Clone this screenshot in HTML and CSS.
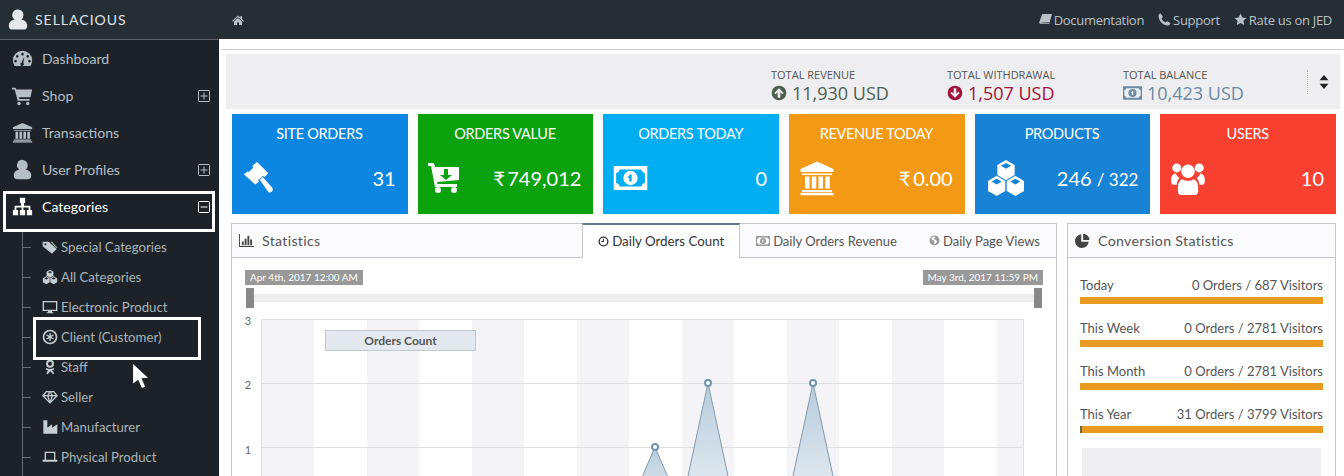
FILE: index.html
```html
<!DOCTYPE html>
<html lang="en">
<head>
    <meta charset="UTF-8">
    <title>Sellacious - Dashboard</title>
    <link rel="stylesheet" href="styles.css">
</head>
<body>
    <svg class="sprite" aria-hidden="true">
        <symbol id="i-user" viewBox="0 0 24 24"><path d="M12 1a6 6 0 0 1 6 6 6 6 0 0 1-2.4 5c3.600.6 6.400 2.800 6.400 7 0 2.500-1.500 4-4 4H6c-2.500 0-4-1.500-4-4 0-4.200 2.800-6.400 6.400-7A6 6 0 0 1 12 1z"/></symbol>
        <symbol id="i-bank" viewBox="0 0 24 24"><path d="M12 1l11 5v2H1V6zM2 9h20v1H2zM4 11h3v8H4zM8.500 11h3v8h-3zM13 11h3v8h-3zM17.500 11h3v8h-3zM2 20h20v1.500H2zM1 22h22v1.500H1z"/></symbol>
        <symbol id="i-money" viewBox="0 0 28 20"><path fill-rule="evenodd" d="M0 0h28v20H0zM5 3a4 4 0 0 1-3 3v8a4 4 0 0 1 3 3h18a4 4 0 0 1 3-3V6a4 4 0 0 1-3-3zM14 4a6 6 0 1 1 0 12 6 6 0 0 1 0-12zM13 7v1.500h-1V10h1v3h2V7z"/></symbol>
        <symbol id="i-cubes" viewBox="0 0 28 25"><path fill-rule="evenodd" d="M14 0l6 3.500v7L14 14l-6-3.500v-7zM14 2l-3.500 2 3.500 2 3.500-2zM7.500 11l6 3.500v7l-6 3.500-6-3.500v-7zM7.500 13L4 15l3.500 2 3.500-2zM20.500 11l6 3.500v7l-6 3.500-6-3.500v-7zM20.500 13L17 15l3.500 2 3.500-2z"/></symbol>
        <symbol id="i-plus" viewBox="0 0 14 14"><path fill="none" stroke="currentColor" d="M2.500 1.500h9a1 1 0 0 1 1 1v9a1 1 0 0 1-1 1h-9a1 1 0 0 1-1-1v-9a1 1 0 0 1 1-1zM3.500 7h7M7 3.500v7"/></symbol>
    </svg>

    <div class="sidebar">
        <div class="brand">
            <svg class="brand-icon"><use href="#i-user"/></svg>
            <span>SELLACIOUS</span>
        </div>
        <ul class="menu">
            <li>
                <svg class="menu-icon" viewBox="0 0 24 24"><path fill-rule="evenodd" d="M12 3a11 11 0 0 1 11 11c0 2.500-.7 4.700-2 6.500H3A11 11 0 0 1 1 14 11 11 0 0 1 12 3zM12 5.500a1.500 1.500 0 1 0 0 3 1.500 1.500 0 0 0 0-3zM6 8a1.500 1.500 0 1 0 0 3 1.500 1.500 0 0 0 0-3zM18 8a1.500 1.500 0 1 0 0 3 1.500 1.500 0 0 0 0-3zM4 13.500a1.500 1.500 0 1 0 0 3 1.500 1.500 0 0 0 0-3zM20 13.500a1.500 1.500 0 1 0 0 3 1.500 1.500 0 0 0 0-3zM14 10l-3 6.500a2 2 0 1 0 2 .5z"/></svg>
                <span>Dashboard</span>
            </li>
            <li>
                <svg class="menu-icon" viewBox="0 0 24 24"><path d="M0 3h4l1 2h18l-2 9H8l.4 2H20v2H6.500L3 5H0zM8 19a2 2 0 1 1 0 4 2 2 0 0 1 0-4zM18 19a2 2 0 1 1 0 4 2 2 0 0 1 0-4z"/></svg>
                <span>Shop</span>
                <svg class="toggle"><use href="#i-plus"/></svg>
            </li>
            <li>
                <svg class="menu-icon"><use href="#i-bank"/></svg>
                <span>Transactions</span>
            </li>
            <li>
                <svg class="menu-icon"><use href="#i-user"/></svg>
                <span>User Profiles</span>
                <svg class="toggle"><use href="#i-plus"/></svg>
            </li>
            <li class="open">
                <svg class="menu-icon" viewBox="0 0 24 24"><path d="M9 2h6v6h-1.200v3H21v5h2v6h-6v-6h2v-3h-6v3h2v6H9v-6h2v-3H5v3h2v6H1v-6h2v-5h7.200V8H9z"/></svg>
                <span>Categories</span>
                <svg class="toggle" viewBox="0 0 14 14"><path fill="none" stroke="currentColor" d="M2.500 1.500h9a1 1 0 0 1 1 1v9a1 1 0 0 1-1 1h-9a1 1 0 0 1-1-1v-9a1 1 0 0 1 1-1zM3.500 7h7"/></svg>
            </li>
        </ul>
        <ul class="submenu">
            <li>
                <svg class="sub-icon" viewBox="0 0 24 24"><path fill-rule="evenodd" d="M1 4h9l12 11-7 7L1 11zM5 6.500a1.500 1.500 0 1 0 0 3 1.500 1.500 0 0 0 0-3z"/><path d="M13 4h2l8 9-1 1z"/></svg>
                <span>Special Categories</span>
            </li>
            <li>
                <svg class="sub-icon"><use href="#i-cubes"/></svg>
                <span>All Categories</span>
            </li>
            <li>
                <svg class="sub-icon" viewBox="0 0 24 24"><path fill-rule="evenodd" d="M1 3h22v15h-8v2h2v1.500H7V20h2v-2H1zM3 5v11h18V5z"/></svg>
                <span>Electronic Product</span>
            </li>
            <li>
                <svg class="sub-icon" viewBox="0 0 24 24"><path fill-rule="evenodd" d="M12 1a11 11 0 1 1 0 22 11 11 0 0 1 0-22zM12 3.500a8.500 8.500 0 1 0 0 17 8.500 8.500 0 0 0 0-17zM11 6h2v4.300l3.700-2.100 1 1.700L14 12l3.700 2.100-1 1.700-3.700-2.100V18h-2v-4.300l-3.700 2.100-1-1.700L10 12 6.300 9.900l1-1.700 3.700 2.100z"/></svg>
                <span>Client (Customer)</span>
            </li>
            <li>
                <svg class="sub-icon" viewBox="0 0 24 24"><path fill-rule="evenodd" d="M12 1a6 6 0 1 1 0 12 6 6 0 0 1 0-12zM12 4a3 3 0 1 0 0 6 3 3 0 0 0 0-6zM6.500 13.500c3 2 8 2 11 0l1 2c-1 .8-2.300 1.300-3.500 1.600l3.500 4.200-2 1.700-4-4.500-4 4.500-2-1.700L9 17.100c-1.200-.3-2.500-.8-3.500-1.600z"/></svg>
                <span>Staff</span>
            </li>
            <li>
                <svg class="sub-icon" viewBox="0 0 24 24"><path fill-rule="evenodd" d="M6 3h12l6 7-12 12L0 10zM7 5L3.500 9h4.800L10 5zM14 5l1.700 4h4.800L17 5zM11.900 5L10.300 9h3.400zM3.600 11l6.400 6.500L7.700 11zM10 11l2 7 2-7zM16.300 11L14 17.500l6.400-6.500z"/></svg>
                <span>Seller</span>
            </li>
            <li>
                <svg class="sub-icon" viewBox="0 0 24 24"><path d="M2 2h6v11l7-5v5l8-5v14H2z"/></svg>
                <span>Manufacturer</span>
            </li>
            <li>
                <svg class="sub-icon" viewBox="0 0 24 24"><path fill-rule="evenodd" d="M4 4h16v12h3v3H1v-3h3zM6 6v10h12V6z"/></svg>
                <span>Physical Product</span>
            </li>
        </ul>

        <div class="mark mark-categories"></div>
        <div class="mark mark-client"></div>
        <svg class="pointer" viewBox="0 0 18 28"><path d="M1 1l16 15-7 .5 4 9-3.500 1.500-4-9L1 22z"/></svg>
    </div>

    <div class="main">
        <div class="topbar">
            <svg class="home-icon" viewBox="0 0 24 24"><path d="M12 3l5 4.500V4h3v6.200L24 14l-1.500 1.500L12 6 1.500 15.500 0 14zM4 15l8-7 8 7v7h-6v-5h-4v5H4z"/></svg>
            <div class="top-links">
                <span><svg viewBox="0 0 24 24"><path d="M6 2h18l-5 18H3c-2 0-3-1.500-2.500-3.500zM4 17.500L3.500 18H18l.5-1.500z"/></svg>Documentation</span>
                <span><svg viewBox="0 0 24 24"><path d="M5 1l4 6-2.500 3c1 3 4 6 7.500 7.500l3-2.500 6 4c-1 3-3 4-5 4C9 23 1 14 1 5c0-2 1.500-3.500 4-4z"/></svg>Support</span>
                <span><svg viewBox="0 0 24 24"><path d="M12 1l3.400 7.300 7.600.9-5.600 5.300 1.500 7.800L12 18.500l-6.900 3.800 1.500-7.800L1 9.200l7.600-.9z"/></svg>Rate us on JED</span>
            </div>
        </div>

        <div class="content">
            <div class="summary">
                <div class="total total-revenue">
                    <div class="total-label">TOTAL REVENUE</div>
                    <div class="total-value">
                        <svg viewBox="0 0 24 24"><path fill-rule="evenodd" d="M12 1a11 11 0 1 1 0 22 11 11 0 0 1 0-22zM12 5l-7 7 2 2 3-3v8h4v-8l3 3 2-2z"/></svg>
                        11,930 USD
                    </div>
                </div>
                <div class="total total-withdrawal">
                    <div class="total-label">TOTAL WITHDRAWAL</div>
                    <div class="total-value">
                        <svg viewBox="0 0 24 24"><path fill-rule="evenodd" d="M12 1a11 11 0 1 1 0 22 11 11 0 0 1 0-22zM12 19l7-7-2-2-3 3V5h-4v8l-3-3-2 2z"/></svg>
                        1,507 USD
                    </div>
                </div>
                <div class="total total-balance">
                    <div class="total-label">TOTAL BALANCE</div>
                    <div class="total-value">
                        <svg class="money-sm"><use href="#i-money"/></svg>
                        10,423 USD
                    </div>
                </div>
                <div class="sorter">
                    <svg viewBox="0 0 12 18"><path d="M6 1l5 6H1zM1 11h10l-5 6z"/></svg>
                </div>
            </div>

            <div class="cards">
                <div class="card card-blue">
                    <div class="card-title">SITE ORDERS</div>
                    <div class="card-body">
                        <svg class="card-icon" viewBox="0 0 32 34"><path d="M15 0l12 12-4 4-2-1-5 5 1 1-4 3L1 13l4-3 1 1 5-5-1-2zM18 19l3-3 10 11c1 2 1 3 0 4s-3 2-4 1z"/></svg>
                        <div class="card-value">31</div>
                    </div>
                </div>
                <div class="card card-green">
                    <div class="card-title">ORDERS VALUE</div>
                    <div class="card-body">
                        <svg class="card-icon" viewBox="0 0 32 30"><path fill-rule="evenodd" d="M0 0h6l1 4h24v13l-22 2 .5 2H29v3H7L3 3H0zM16 6v6h-4l6 5 6-5h-4V6zM10 24a3 3 0 1 1 0 6 3 3 0 0 1 0-6zM26 24a3 3 0 1 1 0 6 3 3 0 0 1 0-6z"/></svg>
                        <div class="card-value">₹&thinsp;749,012</div>
                    </div>
                </div>
                <div class="card card-sky">
                    <div class="card-title">ORDERS TODAY</div>
                    <div class="card-body">
                        <svg class="card-icon card-icon-money"><use href="#i-money"/></svg>
                        <div class="card-value">0</div>
                    </div>
                </div>
                <div class="card card-orange">
                    <div class="card-title">REVENUE TODAY</div>
                    <div class="card-body">
                        <svg class="card-icon card-icon-bank"><use href="#i-bank"/></svg>
                        <div class="card-value">₹&thinsp;0.00</div>
                    </div>
                </div>
                <div class="card card-blue2">
                    <div class="card-title">PRODUCTS</div>
                    <div class="card-body">
                        <svg class="card-icon card-icon-cubes"><use href="#i-cubes"/></svg>
                        <div class="card-value">246 <small>/ 322</small></div>
                    </div>
                </div>
                <div class="card card-red">
                    <div class="card-title">USERS</div>
                    <div class="card-body">
                        <svg class="card-icon card-icon-users" viewBox="0 0 32 32"><path d="M6 3a4 4 0 1 1 0 8 4 4 0 0 1 0-8zM26 3a4 4 0 1 1 0 8 4 4 0 0 1 0-8zM16 4a6 6 0 1 1 0 12 6 6 0 0 1 0-12zM1 18c0-4 2-6 4-6 1 2 2 3 3.500 4-1.500 1.500-2.500 3-2.500 6H3c-1 0-2-1-2-4zM31 18c0-4-2-6-4-6-1 2-2 3-3.500 4 1.500 1.500 2.500 3 2.500 6h3c1 0 2-1 2-4zM11 17c3 2 7 2 10 0 3 1 4 4 4 8v3c0 2-1 3-3 3H10c-2 0-3-1-3-3v-3c0-4 1-7 4-8z"/></svg>
                        <div class="card-value">10</div>
                    </div>
                </div>
            </div>

            <div class="panels">
                <div class="panel panel-stats">
                    <div class="panel-head">
                        <div class="panel-title">
                            <svg viewBox="0 0 16 14"><path d="M0 0h1v13h15v1H0zM3 8h2v4H3zM6 5h2v7H6zM9 2h2v10H9zM12 6h2v6h-2z"/></svg>
                            Statistics
                        </div>
                        <div class="tab active">
                            <svg viewBox="0 0 24 24"><path fill-rule="evenodd" d="M12 1a11 11 0 1 1 0 22 11 11 0 0 1 0-22zM12 4a8 8 0 1 0 0 16 8 8 0 0 0 0-16zM11 6h2v7H7v-2h4z"/></svg>
                            Daily Orders Count
                        </div>
                        <div class="tab">
                            <svg class="tab-money"><use href="#i-money"/></svg>
                            Daily Orders Revenue
                        </div>
                        <div class="tab">
                            <svg viewBox="0 0 24 24"><path d="M12 1a11 11 0 1 1 0 22 11 11 0 0 1 0-22zM9 4L5 7l2 4 4 1 1 3-1 5 3-1 4-5-3-3-3-1-1-3 3-1-1-2z" fill-rule="evenodd"/></svg>
                            Daily Page Views
                        </div>
                    </div>
                    <div class="panel-body">
                        <div class="range-labels">
                            <span>Apr 4th, 2017 12:00 AM</span>
                            <span>May 3rd, 2017 11:59 PM</span>
                        </div>
                        <div class="range">
                            <div class="range-handle"></div>
                            <div class="range-track"></div>
                            <div class="range-handle"></div>
                        </div>
                        <div class="chart">
                            <svg class="plot" viewBox="0 0 825 168">
                                <defs>
                                    <linearGradient id="fade" x1="0" y1="0" x2="0" y2="1">
                                        <stop offset="0" stop-color="#b7cbdb"/>
                                        <stop offset="1" stop-color="#eaf0f5"/>
                                    </linearGradient>
                                </defs>
                                <g fill="#f4f3f6">
                                    <rect x="31" y="10" width="53" height="158"/>
                                    <rect x="137" y="10" width="52" height="158"/>
                                    <rect x="242" y="10" width="52" height="158"/>
                                    <rect x="347" y="10" width="52" height="158"/>
                                    <rect x="452" y="10" width="52" height="158"/>
                                    <rect x="557" y="10" width="52" height="158"/>
                                    <rect x="662" y="10" width="52" height="158"/>
                                    <rect x="767" y="10" width="27" height="158"/>
                                </g>
                                <path d="M31 10.500H794M31 74.500H794M31 138.500H794M31.500 10V168M793.500 10V168" stroke="#e0e0e0" fill="none"/>
                                <g fill="url(#fade)" stroke="#7f9bb0">
                                    <path d="M397.500 202L425 138 452.500 202z"/>
                                    <path d="M450.500 202L478 74 505.500 202z"/>
                                    <path d="M555.500 202L583 74 610.500 202z"/>
                                </g>
                                <g fill="#fff" stroke="#6f95ac" stroke-width="2">
                                    <circle cx="425" cy="138" r="3"/>
                                    <circle cx="478" cy="74" r="3"/>
                                    <circle cx="583" cy="74" r="3"/>
                                </g>
                                <g class="axis">
                                    <text x="18" y="16">3</text>
                                    <text x="18" y="80">2</text>
                                    <text x="18" y="145">1</text>
                                </g>
                            </svg>
                            <div class="legend">Orders Count</div>
                        </div>
                    </div>
                </div>

                <div class="panel panel-conversion">
                    <div class="panel-head">
                        <div class="panel-title">
                            <svg viewBox="0 0 24 24"><path d="M10 2v12h12A11 11 0 1 1 10 2zM13 1a10 10 0 0 1 10 10H13z"/></svg>
                            Conversion Statistics
                        </div>
                    </div>
                    <div class="conversion-body">
                        <div class="rate">
                            <div class="rate-text"><span>Today</span><span>0 Orders / 687 Visitors</span></div>
                            <div class="rate-bar"></div>
                        </div>
                        <div class="rate">
                            <div class="rate-text"><span>This Week</span><span>0 Orders / 2781 Visitors</span></div>
                            <div class="rate-bar"></div>
                        </div>
                        <div class="rate">
                            <div class="rate-text"><span>This Month</span><span>0 Orders / 2781 Visitors</span></div>
                            <div class="rate-bar"></div>
                        </div>
                        <div class="rate">
                            <div class="rate-text"><span>This Year</span><span>31 Orders / 3799 Visitors</span></div>
                            <div class="rate-bar"><div class="rate-fill" style="width: 1%"></div></div>
                        </div>
                        <div class="conversion-chart"></div>
                    </div>
                </div>
            </div>
        </div>
    </div>
</body>
</html>
```

FILE: styles.css
```css
/* Global Styles */
* {
    margin: 0;
    padding: 0;
    box-sizing: border-box;
}

body {
    font-family: 'Lato', sans-serif;
    background-color: #fff;
    display: flex;
    height: 100vh;
    overflow: hidden;
    color: #444;
}

svg {
    fill: currentColor;
    flex-shrink: 0;
}

ul {
    list-style: none;
}

.sprite {
    display: none;
}

/* Sidebar */
.sidebar {
    position: relative;
    display: flex;
    flex-direction: column;
    width: 219px;
    flex-shrink: 0;
    background-color: #1d2229;
    color: #b4bfc4;
}

.brand {
    display: flex;
    align-items: center;
    gap: 6px;
    height: 40px;
    padding-left: 7px;
    background-color: #252d35;
    border-bottom: 1px solid #5b6166;
    color: #dfe3e5;
    font-size: 14px;
    letter-spacing: 1px;
}

.brand-icon {
    width: 22px;
    height: 23px;
    color: #e4e8ea;
}

.menu li {
    display: flex;
    align-items: center;
    height: 37px;
    padding-left: 12px;
    font-size: 14.1px;
}

.menu-icon {
    width: 21px;
    height: 21px;
    margin-right: 9px;
}

.toggle {
    width: 14px;
    height: 14px;
    margin-left: auto;
    margin-right: 8px;
}

.menu li.open {
    color: #fff;
}

.submenu {
    flex-grow: 1;
    margin-top: 7px;
    margin-left: 22px;
    border-left: 1px solid #666b70;
}

.submenu li {
    display: flex;
    align-items: center;
    height: 30px;
    padding-left: 19px;
    font-size: 13.2px;
    color: #a9b4b8;
    position: relative;
}

.submenu li::before {
    content: "";
    position: absolute;
    left: 0;
    top: 15px;
    width: 8px;
    height: 1px;
    background-color: #666b70;
}

.sub-icon {
    width: 16px;
    height: 16px;
    margin-right: 3px;
    color: #c5ced1;
}

/* White marks drawn over the menu */
.mark {
    position: absolute;
    border: 3px solid #fff;
}

.mark-categories {
    left: 3px;
    top: 191px;
    width: 212px;
    height: 41px;
}

.mark-client {
    left: 33px;
    top: 317px;
    width: 168px;
    height: 43px;
}

.pointer {
    position: absolute;
    left: 132px;
    top: 363px;
    width: 17px;
    height: 26px;
    color: #fff;
}

/* Main Content Area */
.main {
    flex-grow: 1;
    min-width: 0;
}

.topbar {
    display: flex;
    align-items: center;
    height: 39px;
    padding: 0 12px 0 13px;
    background-color: #252d35;
    color: #b9c2c7;
}

.home-icon {
    width: 12px;
    height: 12px;
}

.top-links {
    display: flex;
    gap: 14px;
    margin-left: auto;
    font-family: 'Open Sans', sans-serif;
    font-size: 13px;
    letter-spacing: -0.3px;
}

.top-links span {
    display: flex;
    align-items: center;
    gap: 2px;
}

.top-links svg {
    width: 13px;
    height: 13px;
}

.content {
    margin: 10px 0 0 2px;
    border-top: 1px solid #cfcfd4;
    padding: 4px 4px 0 5px;
}

/* Summary strip */
.summary {
    display: flex;
    justify-content: flex-end;
    align-items: center;
    height: 55px;
    background-color: #eeeef0;
    font-family: 'Open Sans', sans-serif;
}

.total {
    width: 176px;
    margin-top: 9px;
}

.total-balance {
    width: 184px;
}

.total-label {
    font-size: 11px;
    line-height: 13px;
    color: #555;
}

.total-value {
    display: flex;
    align-items: center;
    gap: 5px;
    font-size: 18px;
    line-height: 24px;
}

.total-value svg {
    width: 16px;
    height: 16px;
}

.total-value .money-sm {
    width: 19px;
    height: 14px;
}

.total-revenue .total-value {
    color: #4d5f50;
}

.total-withdrawal .total-value {
    color: #a1123a;
}

.total-balance .total-value {
    color: #6b8aa6;
}

.sorter {
    display: flex;
    align-items: center;
    width: 33px;
    height: 24px;
    padding-left: 10px;
    border-left: 1px dotted #bbb;
    color: #222;
}

.sorter svg {
    width: 12px;
    height: 16px;
}

/* Stat cards */
.cards {
    display: flex;
    gap: 10px;
    margin: 5px 4px 0 6px;
}

.card {
    flex: 1;
    height: 100px;
    padding: 12px 12px 0 11px;
    color: #fff;
}

.card-title {
    text-align: center;
    font-size: 14.5px;
    line-height: 16px;
    letter-spacing: -0.3px;
}

.card-body {
    display: flex;
    align-items: center;
    justify-content: space-between;
    margin-top: 11px;
    height: 50px;
}

.card-icon {
    width: 32px;
    height: 32px;
    margin-left: -1px;
}

.card-icon-money {
    width: 35px;
    height: 24px;
}

.card-icon-bank {
    width: 36px;
    height: 36px;
}

.card-icon-cubes {
    width: 42px;
    height: 36px;
}

.card-icon-users {
    width: 36px;
    height: 36px;
}

.card-value {
    font-size: 20px;
}

.card-value small {
    font-size: 17px;
}

.card-blue {
    background-color: #0c86e0;
}

.card-green {
    background-color: #0ba20d;
}

.card-sky {
    background-color: #02adf2;
}

.card-orange {
    background-color: #f29a16;
}

.card-blue2 {
    background-color: #1883d4;
}

.card-red {
    background-color: #f7402f;
}

/* Panels */
.panels {
    display: flex;
    gap: 10px;
    margin: 9px 4px 0 5px;
}

.panel {
    border: 1px solid #c6c6cb;
    border-bottom: 0;
    height: 253px;
}

.panel-stats {
    flex: 1;
    min-width: 0;
}

.panel-conversion {
    width: 269px;
}

.panel-head {
    display: flex;
    height: 34px;
    background-color: #fbfafc;
    border-bottom: 1px solid #c6c6cb;
}

.panel-title {
    display: flex;
    align-items: center;
    gap: 8px;
    flex-grow: 1;
    padding-left: 7px;
    font-size: 14.2px;
    letter-spacing: 0.3px;
    color: #555;
}

.panel-title svg {
    width: 15px;
    height: 13px;
    color: #444;
}

.panel-conversion .panel-title svg {
    height: 15px;
}

.tab {
    display: flex;
    align-items: center;
    gap: 3px;
    height: 33px;
    padding: 0 16px;
    font-size: 13px;
    color: #555;
    white-space: nowrap;
}

.tab svg {
    width: 11px;
    height: 11px;
    color: #999;
}

.tab .tab-money {
    width: 14px;
    height: 10px;
}

.tab.active {
    width: 158px;
    height: 35px;
    margin-top: -1px;
    padding: 0 0 1px 15px;
    background-color: #fff;
    border-top: 2px solid #5a7d8c;
    border-left: 1px solid #c6c6cb;
    border-right: 1px solid #c6c6cb;
    font-size: 13.3px;
    color: #333;
}

.tab.active svg {
    color: #333;
}

.panel-body {
    padding: 12px 13px 0 13px;
}

.range-labels {
    display: flex;
    justify-content: space-between;
}

.range-labels span {
    padding: 0 5px;
    height: 15px;
    line-height: 15px;
    background-color: #999;
    color: #fff;
    font-size: 10px;
    white-space: nowrap;
}

.range {
    display: flex;
    align-items: center;
    margin-top: 3px;
    padding: 0 1px;
}

.range-handle {
    width: 8px;
    height: 20px;
    background-color: #888;
}

.range-track {
    flex-grow: 1;
    height: 8px;
    background-color: #eeeef0;
}

.chart {
    position: relative;
    margin: 1px 0 0 -15px;
}

.plot {
    display: block;
    width: 825px;
    height: 168px;
}

.axis text {
    font-family: 'Lato', sans-serif;
    font-size: 11px;
    fill: #666;
    text-anchor: middle;
}

.legend {
    position: absolute;
    left: 95px;
    top: 21px;
    width: 151px;
    height: 21px;
    line-height: 19px;
    text-align: center;
    background-color: #e4e9ef;
    border: 1px solid #bcc8d2;
    font-size: 12px;
    font-weight: 700;
    color: #555;
}

/* Conversion panel */
.conversion-body {
    padding: 19px 12px 0 12px;
}

.rate {
    height: 43px;
}

.rate-text {
    display: flex;
    justify-content: space-between;
    font-size: 13px;
    line-height: 17px;
    color: #555;
}

.rate-bar {
    height: 7px;
    margin-top: 3px;
    background-color: #e99a20;
}

.rate-fill {
    height: 100%;
    background-color: #6b6b3a;
}

.conversion-chart {
    height: 28px;
    margin: -1px 2px 0;
    background-color: #eeeef0;
}
```
